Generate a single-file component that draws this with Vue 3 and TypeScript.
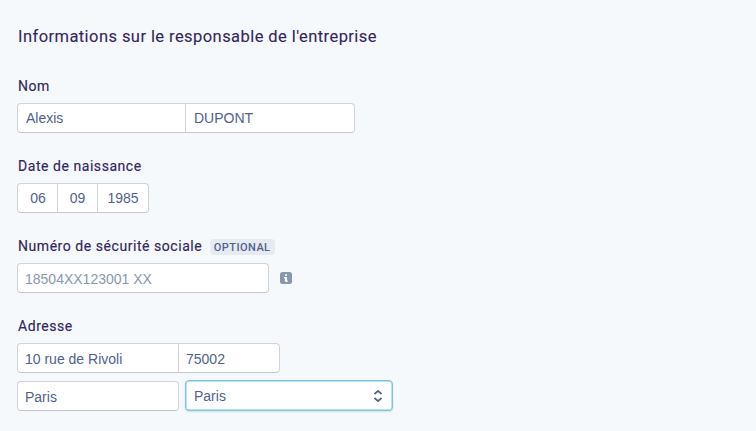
<script setup lang="ts">
import { ref } from 'vue'

const first = ref('Alexis')
const last = ref('DUPONT')
const day = ref('06')
const month = ref('09')
const year = ref('1985')
const street = ref('10 rue de Rivoli')
const zip = ref('75002')
const city = ref('Paris')
const region = ref('Paris')
</script>

<template>
  <main class="page">
    <h1>Informations sur le responsable de l'entreprise</h1>
    <section class="field">
      <h2>Nom</h2>
      <div class="group name">
        <input v-model="first" /><input v-model="last" />
      </div>
    </section>
    <section class="field">
      <h2>Date de naissance</h2>
      <div class="group date">
        <input v-model="day" /><input v-model="month" /><input v-model="year" />
      </div>
    </section>
    <section class="field">
      <h2>Numéro de sécurité sociale <span class="badge">OPTIONAL</span></h2>
      <div class="line">
        <div class="group ssn"><input placeholder="18504XX123001 XX" /></div>
        <svg class="info" width="12" height="12" viewBox="0 0 12 12">
          <rect width="12" height="12" rx="2.5" fill="#8898aa" />
          <path d="M5 2.2h2v1.600H5zM4 5H7v3.600h.9V9.800H4.900V6.200H4z" fill="#fff" />
        </svg>
      </div>
    </section>
    <section class="field">
      <h2>Adresse</h2>
      <div class="group address">
        <input v-model="street" /><input v-model="zip" />
      </div>
      <div class="line second">
        <div class="group city"><input v-model="city" /></div>
        <button class="select" type="button">
          <span>{{ region }}</span>
          <svg width="10" height="14" viewBox="0 0 10 14">
            <path d="M1.500 5 5 1.900 8.500 5M1.500 9 5 12.100 8.500 9" fill="none" stroke="#525f8f" stroke-width="1.700" stroke-linejoin="round" />
          </svg>
        </button>
      </div>
    </section>
  </main>
</template>

<style>
body {
  background: #f6f9fc;
}
</style>

<style scoped>
.page {
  box-sizing: border-box;
  height: 431px;
  padding: 24px 17px 0;
  overflow: hidden;
  background: #f6f9fc;
  color: #32265c;
  font-family: Roboto, sans-serif;
}
h1 {
  margin: 0 0 38px 1px;
  padding-top: 1px;
  font-size: 16.500px;
  line-height: 23px;
  font-weight: 400;
  letter-spacing: 0.430px;
  -webkit-text-stroke: 0.1px currentColor;
}
h2 {
  display: flex;
  align-items: center;
  margin: 0 0 7px 1px;
  height: 20px;
  font-size: 14px;
  line-height: 18px;
  font-weight: 400;
  letter-spacing: 0.550px;
  -webkit-text-stroke: 0.15px currentColor;
}
.field {
  height: 80px;
  margin-top: -10px;
  margin-bottom: 10px;
}
.badge {
  margin-top: 2px;
  margin-left: 7.500px;
  padding: 1px 4px 0;
  border-radius: 4px;
  background: #e6ebf1;
  color: #525f8f;
  font-size: 11px;
  line-height: 15px;
  font-weight: 500;
  letter-spacing: 0.450px;
  -webkit-text-stroke: 0;
}
.group {
  display: flex;
  box-sizing: border-box;
  height: 30px;
  border: 1px solid #d2d1df;
  border-bottom-color: #c6c4d4;
  border-radius: 4px;
  background: #fff;
  overflow: hidden;
}
input {
  box-sizing: border-box;
  min-width: 0;
  flex: 1;
  padding: 0 8px;
  border: 0;
  outline: 0;
  background: transparent;
  color: #525f8f;
  font: 14px "Liberation Sans", sans-serif;
}
input + input {
  border-left: 1px solid #d2d1df;
}
input::placeholder {
  color: #8898aa;
  opacity: 1;
}
.name { width: 338px; }
.name input:first-child { flex: 0 0 167px; }
.date { width: 132px; }
.date input { flex: 0 0 40px; padding: 0; text-align: center; }
.date input:first-child { flex-basis: 39px; padding-left: 1px; }
.date input:last-child { flex: 1; }
.ssn { width: 252px; }
.ssn input,
.address input { padding: 1px 7px 0; }
.city input { padding: 2px 7px 0; }
.address { width: 263px; }
.address input:last-child { flex: 0 0 101px; }
.city { width: 162px; }
.line { display: flex; align-items: center; }
.info { margin-left: 11px; }
.second { margin-top: 7px; }
.second .group { margin-top: 1px; }
.select {
  box-sizing: border-box;
  display: flex;
  align-items: center;
  justify-content: space-between;
  width: 208px;
  height: 31px;
  margin-left: 6px;
  padding: 0 9px 0 8px;
  border: 1px solid #7cc5df;
  border-radius: 4px;
  background: #fff;
  box-shadow: inset 0 0 0 0.500px #7cc5df, 0 1px 2px rgba(80, 110, 150, 0.2);
  color: #525f8f;
  font: 14px "Liberation Sans", sans-serif;
}
</style>
